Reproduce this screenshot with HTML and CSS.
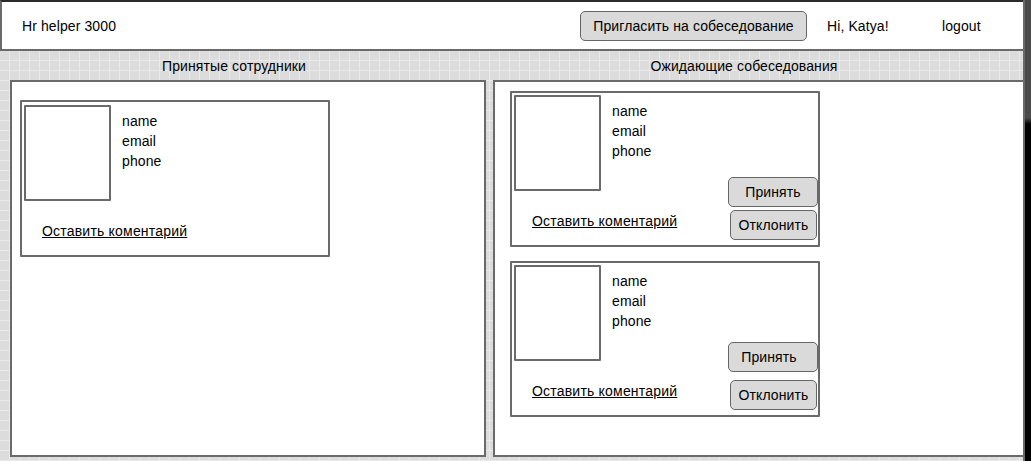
FILE: index.html
```html
<!DOCTYPE html>
<html lang="ru">
<head>
    <meta charset="UTF-8">
    <meta name="viewport" content="width=device-width, initial-scale=1.0">
    <title>Hr helper 3000</title>
    <link rel="stylesheet" href="styles.css">
</head>
<body>
<div class="frame">
  <div class="page">
    <!-- Top bar -->
    <div class="header">
        <div class="brand">Hr helper 3000</div>
        <button class="btn invite-btn">Пригласить на собеседование</button>
        <div class="hello">Hi, Katya!</div>
        <div class="logout">logout</div>
    </div>

    <div class="board">
        <!-- Accepted -->
        <div class="column column-left">
            <div class="column-title">Принятые сотрудники</div>
            <div class="panel">
                <div class="card card-accepted">
                    <div class="photo"></div>
                    <div class="info">
                        <div>name</div>
                        <div>email</div>
                        <div>phone</div>
                    </div>
                    <a class="comment-link" href="#">Оставить коментарий</a>
                </div>
            </div>
        </div>

        <!-- Waiting for interview -->
        <div class="column column-right">
            <div class="column-title">Ожидающие собеседования</div>
            <div class="panel panel-right">
                <div class="card">
                    <div class="photo"></div>
                    <div class="info">
                        <div>name</div>
                        <div>email</div>
                        <div>phone</div>
                    </div>
                    <div class="actions">
                        <button class="btn accept-btn">Принять</button>
                        <button class="btn reject-btn">Отклонить</button>
                    </div>
                    <a class="comment-link" href="#">Оставить коментарий</a>
                </div>
                <div class="card">
                    <div class="photo"></div>
                    <div class="info">
                        <div>name</div>
                        <div>email</div>
                        <div>phone</div>
                    </div>
                    <div class="actions">
                        <button class="btn accept-btn accept-btn-low">Принять</button>
                        <button class="btn reject-btn">Отклонить</button>
                    </div>
                    <a class="comment-link" href="#">Оставить коментарий</a>
                </div>
            </div>
        </div>
    </div>
  </div>
  <div class="edge"></div>
</div>
</body>
</html>
```

FILE: styles.css
```css
* {
    box-sizing: border-box;
}
body {
    margin: 0;
    font-family: "Liberation Sans", Arial, sans-serif;
    font-size: 14px;
    letter-spacing: 0.1px;
    color: #000;
    background: #000;
}
.frame {
    display: flex;
    height: 461px;
    overflow: hidden;
}
.page {
    width: 1025px;
    display: flex;
    flex-direction: column;
    border-right: 2px solid #6a6a6a;
}
.edge {
    flex: 1;
    background: linear-gradient(#4a4a4a 0, #4a4a4a 118px, #000 124px);
}

/* header */
.header {
    height: 51px;
    display: flex;
    align-items: center;
    background: #fff;
    border-top: 2px solid #2a2a2a;
    border-left: 2px solid #6a6a6a;
    border-bottom: 2px solid #6a6a6a;
    padding-left: 20px;
}
.brand {
    flex: 1;
}
.btn {
    font-family: inherit;
    font-size: 14px;
    letter-spacing: 0.1px;
    color: #000;
    background: #dadada;
    border: 1.5px solid #666;
    border-radius: 5px;
    padding: 0;
    height: 30px;
}
.invite-btn {
    width: 227px;
}
.hello {
    margin-left: 20px;
    width: 115px;
}
.logout {
    width: 81px;
}

/* board with grid */
.board {
    flex: 1;
    display: flex;
    gap: 7px;
    padding: 0 0 4px 10px;
    background-color: #dcdcdc;
    background-image:
        linear-gradient(#e9e9e9 1px, transparent 1px),
        linear-gradient(90deg, #e9e9e9 1px, transparent 1px);
    background-size: 10px 10px;
    background-position: 9px 9px;
}
.column {
    display: flex;
    flex-direction: column;
}
.column-left {
    width: 476px;
}
.column-right {
    flex: 1;
}
.column-title {
    height: 29px;
    line-height: 30px;
    text-align: center;
    padding-right: 28px;
}
.panel {
    flex: 1;
    background: #fff;
    border: 2px solid #6a6a6a;
    padding: 18px 0 0 8px;
}
.panel-right {
    border-right: 0;
    padding: 9px 0 0 15px;
    display: flex;
    flex-direction: column;
    gap: 14px;
}

/* candidate card */
.card {
    width: 310px;
    display: grid;
    grid-template-columns: 87px 1fr 90px;
    grid-template-rows: 96px auto;
    border: 2px solid #6a6a6a;
    border-radius: 1px;
    padding: 2px 0 14px 2px;
}
.card-accepted {
    padding-top: 3px;
}
.photo {
    grid-column: 1;
    grid-row: 1;
    border: 2px solid #6a6a6a;
    border-radius: 1px;
}
.info {
    grid-column: 2;
    grid-row: 1;
    margin-left: 11px;
    padding-top: 6px;
    line-height: 20px;
}
.comment-link {
    grid-column: 1 / 3;
    grid-row: 2;
    justify-self: start;
    margin: 20px 0 0 18px;
    line-height: 20px;
    letter-spacing: 0.2px;
    color: #000;
}
.actions {
    grid-column: 3;
    grid-row: 1 / 3;
    align-self: end;
    display: flex;
    flex-direction: column;
    align-items: flex-end;
    margin-bottom: -9px;
}
.accept-btn {
    width: 90px;
    margin-bottom: 3px;
}
.accept-btn-low {
    margin-bottom: 8px;
    padding-right: 8px;
}
.reject-btn {
    width: 87px;
    margin-right: 1px;
}
```
